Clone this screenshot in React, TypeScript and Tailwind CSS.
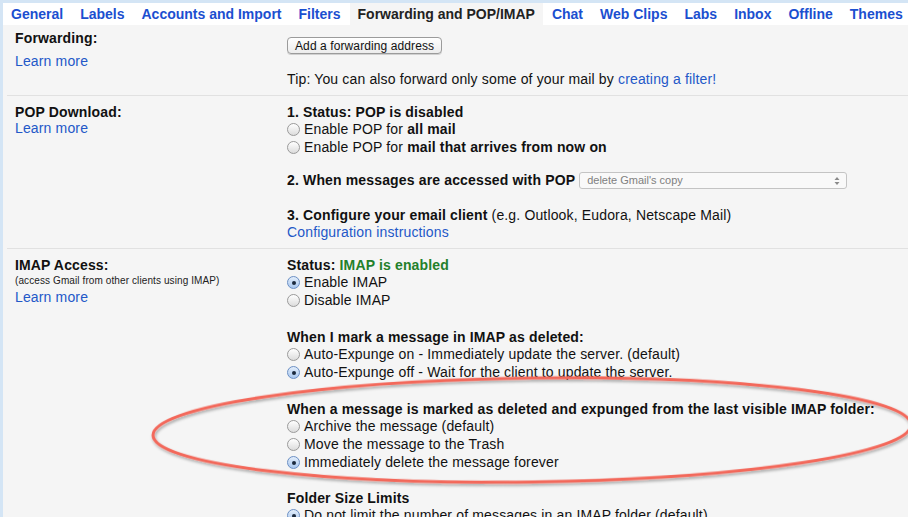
import React from "react";

const tabs = [
  "General",
  "Labels",
  "Accounts and Import",
  "Filters",
  "Forwarding and POP/IMAP",
  "Chat",
  "Web Clips",
  "Labs",
  "Inbox",
  "Offline",
  "Themes",
];

const Radio: React.FC<{ checked?: boolean }> = ({ checked }) => (
  <span
    className={`relative mr-[4px] inline-block h-[13px] w-[13px] shrink-0 rounded-full border ${
      checked
        ? "border-[#6b8fc4] bg-gradient-to-b from-[#e3eefb] to-[#a9c7ee]"
        : "border-[#9a9a9a] bg-gradient-to-b from-[#ffffff] to-[#dcdcdc]"
    }`}
  >
    {checked && (
      <span className="absolute left-1/2 top-1/2 h-[4px] w-[4px] -translate-x-1/2 -translate-y-1/2 rounded-full bg-[#1c2a3d]" />
    )}
  </span>
);

const Option: React.FC<{ checked?: boolean; children: React.ReactNode }> = ({ checked, children }) => (
  <div className="flex h-[18px] items-center">
    <Radio checked={checked} />
    <span>{children}</span>
  </div>
);

const Line: React.FC<{ children: React.ReactNode; className?: string }> = ({ children, className }) => (
  <div className={`h-[18px] leading-[18px] ${className ?? ""}`}>{children}</div>
);

const Link: React.FC<{ children: React.ReactNode }> = ({ children }) => (
  <span className="text-[#2358c8]">{children}</span>
);

export default function App() {
  return (
    <div
      className="relative h-[517px] w-[908px] overflow-hidden bg-[#d4e5f5] pl-[3px] pt-[3px] text-[14px] tracking-[0.15px] text-[#111]"
      style={{ fontFamily: '"Liberation Sans", Arial, sans-serif' }}
    >
      <div className="flex h-[22px] items-stretch gap-px bg-white">
        {tabs.map((t) => {
          const active = t === "Forwarding and POP/IMAP";
          return (
            <div
              key={t}
              className={`flex items-center whitespace-nowrap px-2 text-[14px] font-bold tracking-normal ${
                active ? "bg-[#f5f5f5] text-[#222]" : "text-[#1b4fd0]"
              }`}
            >
              {t}
            </div>
          );
        })}
      </div>

      <div className="h-full bg-[#f5f5f5] pl-[4px]">
        {/* Forwarding */}
        <div className="flex border-b border-[#e1e1e1] pb-[7px] pt-[4px]">
          <div className="w-[280px] shrink-0 pl-[8px]">
            <Line className="font-bold">Forwarding:</Line>
            <Line className="mt-[5px]">
              <Link>Learn more</Link>
            </Line>
          </div>
          <div>
            <div className="mt-[8px] inline-flex h-[17px] items-center rounded-[4px] border border-[#9b9b9b] bg-gradient-to-b from-[#ffffff] to-[#ececec] px-[7px] text-[12px] leading-none tracking-[0.1px] text-[#111] shadow-[0_1px_0_#d0d0d0]">
              Add a forwarding address
            </div>
            <Line className="mt-[14px]">
              Tip: You can also forward only some of your mail by <Link>creating a filter!</Link>
            </Line>
          </div>
        </div>

        {/* POP */}
        <div className="flex border-b border-[#e1e1e1] pb-[7px] pt-[7px]">
          <div className="w-[280px] shrink-0 pl-[8px]">
            <Line className="font-bold">POP Download:</Line>
            <Line className="-mt-[2px]">
              <Link>Learn more</Link>
            </Line>
          </div>
          <div>
            <Line className="font-bold">1. Status: POP is disabled</Line>
            <Option>
              Enable POP for <b>all mail</b>
            </Option>
            <Option>
              Enable POP for <b>mail that arrives from now on</b>
            </Option>
            <div className="mt-[15px] flex h-[18px] items-center">
              <span className="font-bold">2. When messages are accessed with POP</span>
              <span className="ml-[4px] flex h-[17px] w-[268px] items-center justify-between rounded-[3px] border border-[#c4c4c4] bg-[#f9f9f9] pl-[7px] pr-[6px] text-[11px] tracking-normal text-[#808080]">
                delete Gmail's copy
                <svg width="6" height="10" viewBox="0 0 6 10">
                  <path d="M0.5 4 L3 1 L5.5 4 Z M0.5 6 L3 9 L5.5 6 Z" fill="#8a8a8a" />
                </svg>
              </span>
            </div>
            <Line className="mt-[16px]">
              <b>3. Configure your email client</b> (e.g. Outlook, Eudora, Netscape Mail)
            </Line>
            <Line className="-mt-[1px]">
              <Link>Configuration instructions</Link>
            </Line>
          </div>
        </div>

        {/* IMAP */}
        <div className="flex pt-[7px]">
          <div className="w-[280px] shrink-0 pl-[8px]">
            <Line className="font-bold">IMAP Access:</Line>
            <div className="h-[14px] text-[10px] leading-[14px] tracking-[0.1px] text-[#222]">
              (access Gmail from other clients using IMAP)
            </div>
            <Line>
              <Link>Learn more</Link>
            </Line>
          </div>
          <div>
            <Line className="font-bold">
              Status: <span className="text-[#23802a]">IMAP is enabled</span>
            </Line>
            <Option checked>Enable IMAP</Option>
            <Option>Disable IMAP</Option>

            <Line className="mt-[18px] font-bold">When I mark a message in IMAP as deleted:</Line>
            <Option>Auto-Expunge on - Immediately update the server. (default)</Option>
            <Option checked>Auto-Expunge off - Wait for the client to update the server.</Option>

            <Line className="mt-[18px] font-bold">
              When a message is marked as deleted and expunged from the last visible IMAP folder:
            </Line>
            <Option>Archive the message (default)</Option>
            <Option>Move the message to the Trash</Option>
            <Option checked>Immediately delete the message forever</Option>

            <Line className="mt-[17px] font-bold">Folder Size Limits</Line>
            <Option checked>Do not limit the number of messages in an IMAP folder (default)</Option>
          </div>
        </div>
      </div>

      {/* red annotation ellipse */}
      <svg className="pointer-events-none absolute left-0 top-0" width="908" height="517">
        <defs>
          <filter id="sh" x="-10%" y="-30%" width="120%" height="160%">
            <feDropShadow dx="1" dy="2" stdDeviation="1.5" floodColor="#000" floodOpacity="0.35" />
          </filter>
        </defs>
        <ellipse
          cx="532"
          cy="430"
          rx="379"
          ry="52"
          transform="rotate(-0.8 532 430)"
          fill="none"
          stroke="#f3675a"
          strokeWidth="3"
          filter="url(#sh)"
        />
      </svg>
    </div>
  );
}
